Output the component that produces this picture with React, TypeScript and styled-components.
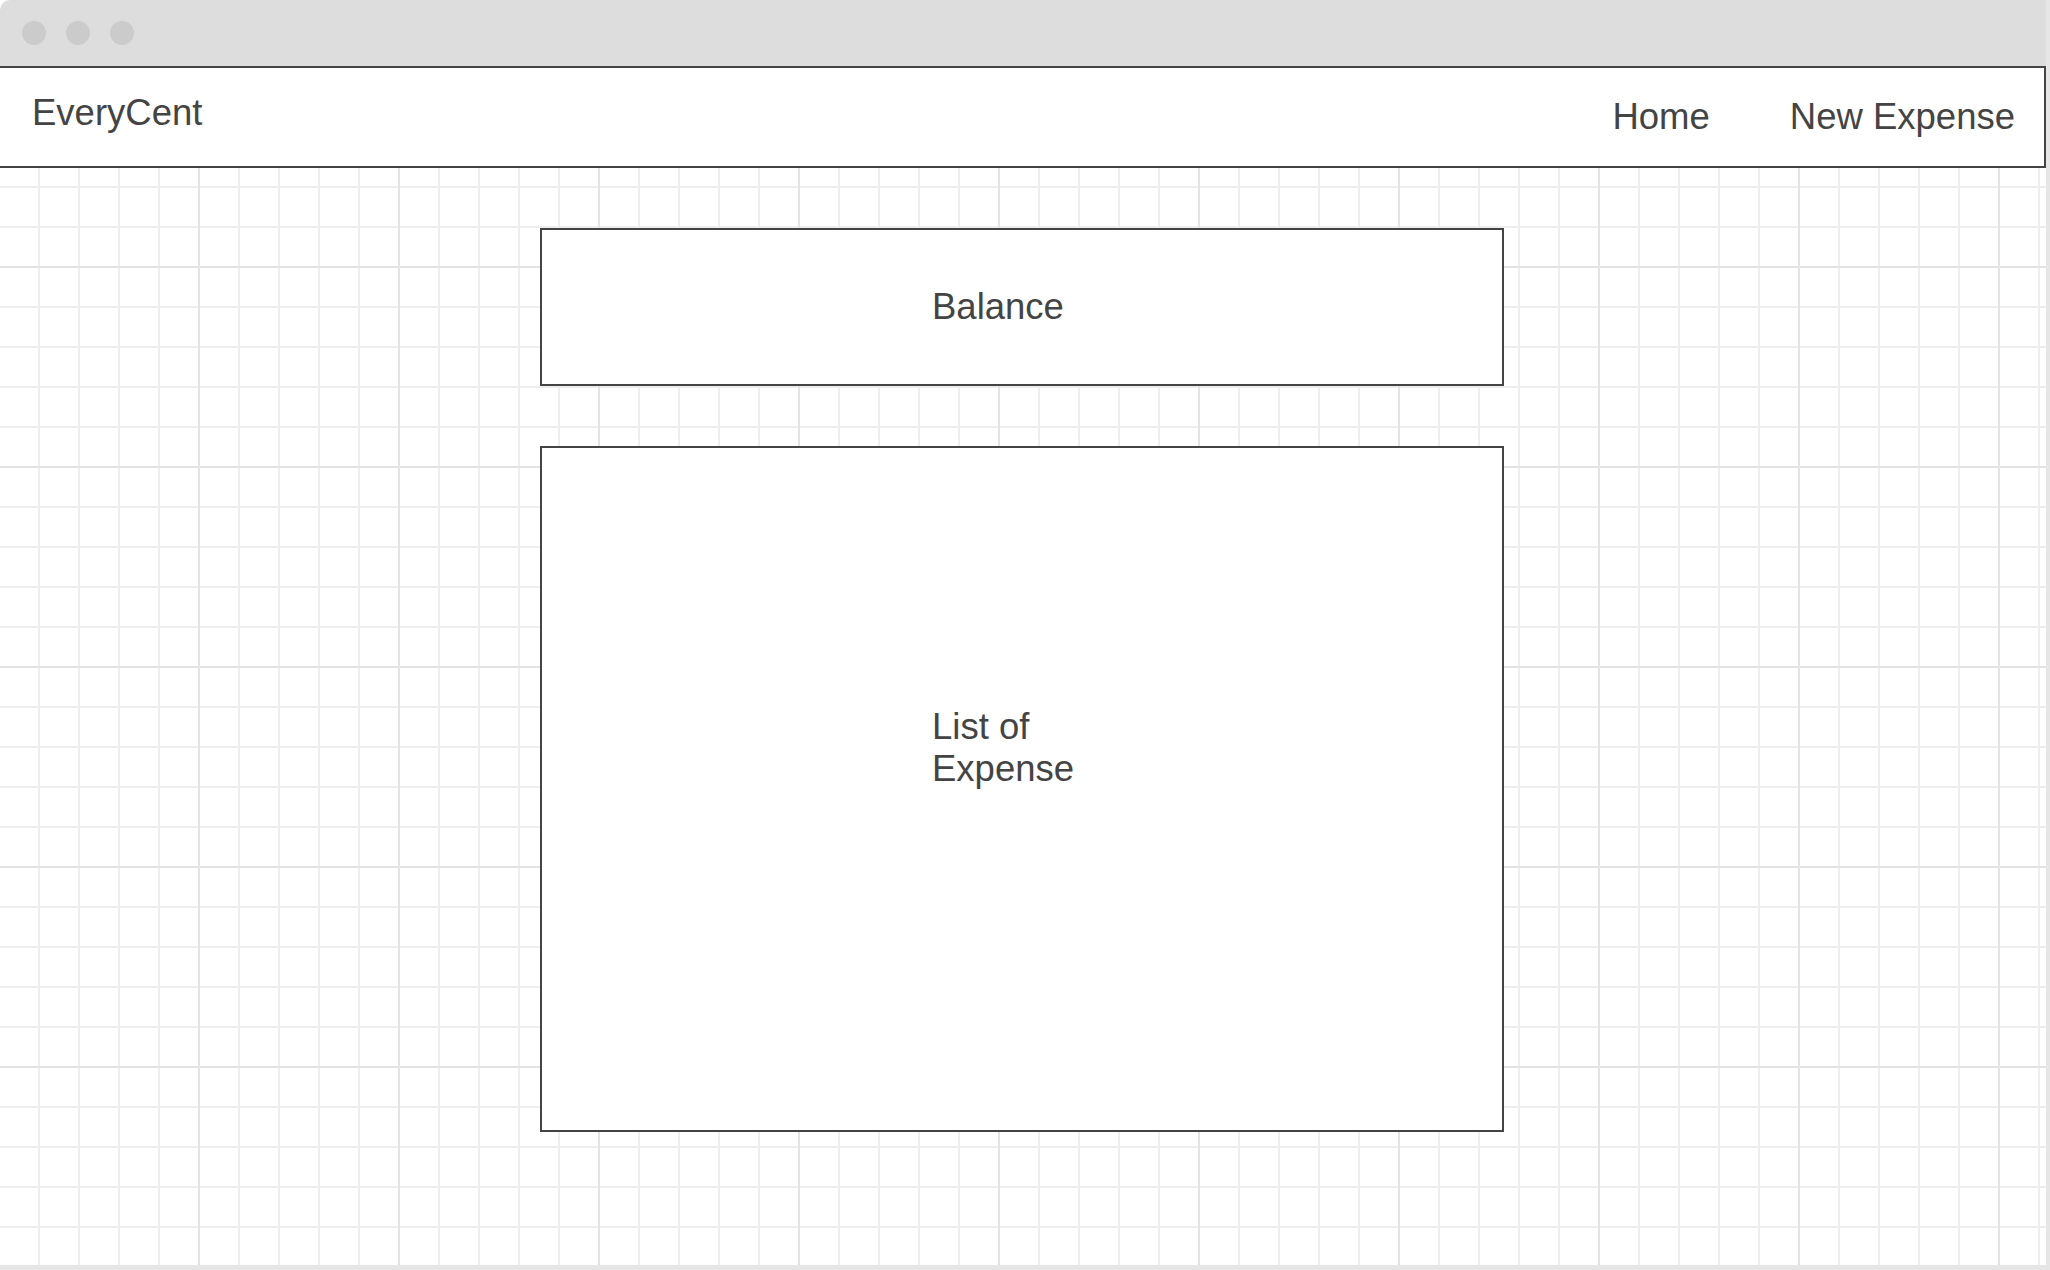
import styled, { createGlobalStyle } from "styled-components"

const GlobalStyle = createGlobalStyle`
  html, body {
    margin: 0;
    padding: 0;
    background: #ffffff;
  }
  body {
    font-family: "Liberation Sans", Arial, Helvetica, sans-serif;
    color: #444444;
  }
`

export default function App() {
  return (
    <>
      <GlobalStyle />
      <Window>
        <TitleBar>
          <Dot />
          <Dot />
          <Dot />
        </TitleBar>
        <Canvas>
          <Nav>
            <Brand>EveryCent</Brand>
            <NavMenu>
              <NavLink>Home</NavLink>
              <NavLink>New Expense</NavLink>
            </NavMenu>
          </Nav>
          <Content>
            <Panel $height={158} $align="center">
              <PanelLabel>Balance</PanelLabel>
            </Panel>
            <Panel $height={686} $align="flex-start" $padTop={258}>
              <PanelLabel>List of Expense</PanelLabel>
            </Panel>
          </Content>
        </Canvas>
      </Window>
    </>
  )
}

const Window = styled.div`
  width: 2050px;
  height: 1270px;
  box-sizing: border-box;
  display: flex;
  flex-direction: column;
  border-right: 4px solid #e6e6e6;
  border-bottom: 5px solid #e6e6e6;
  border-top-left-radius: 10px;
  overflow: hidden;
`

const TitleBar = styled.div`
  height: 66px;
  flex: none;
  background: #dddddd;
  display: flex;
  align-items: center;
  gap: 20px;
  padding: 0 0 0 22px;
  box-sizing: border-box;
`

const Dot = styled.span`
  width: 24px;
  height: 24px;
  border-radius: 50%;
  background: #cbcbcb;
`

const Canvas = styled.div`
  flex: 1;
  display: flex;
  flex-direction: column;
  background-color: #ffffff;
  background-image:
    linear-gradient(to right, transparent 198px, #e3e3e3 198px, #e3e3e3 200px),
    linear-gradient(to bottom, transparent 198px, #e3e3e3 198px, #e3e3e3 200px),
    linear-gradient(to right, transparent 38px, #eeeeee 38px, #eeeeee 40px),
    linear-gradient(to bottom, transparent 38px, #eeeeee 38px, #eeeeee 40px);
  background-size: 200px 200px, 200px 200px, 40px 40px, 40px 40px;
  background-position: 0 2px;
`

const Nav = styled.header`
  height: 102px;
  flex: none;
  box-sizing: border-box;
  background: #ffffff;
  border: 2px solid #444444;
  border-left: none;
  display: flex;
  justify-content: space-between;
  align-items: flex-start;
  padding: 24px 29px 0 32px;
`

const Brand = styled.div`
  font-size: 36.5px;
  color: #444444;
`

const NavMenu = styled.nav`
  display: flex;
  gap: 80px;
  margin-top: 4px;
`

const NavLink = styled.a`
  font-size: 36.5px;
  color: #444444;
  text-decoration: none;
  cursor: pointer;
`

const Content = styled.main`
  display: flex;
  flex-direction: column;
  align-items: center;
  gap: 60px;
  padding: 60px 2px 0 0;
`

const Panel = styled.section<{ $height: number; $align: string; $padTop?: number }>`
  width: 964px;
  height: ${(p) => p.$height}px;
  box-sizing: border-box;
  border: 2px solid #444444;
  background: #ffffff;
  display: flex;
  justify-content: center;
  align-items: ${(p) => p.$align};
  padding-top: ${(p) => p.$padTop ?? 0}px;
`

const PanelLabel = styled.div`
  width: 180px;
  font-size: 36.5px;
  color: #444444;
  text-align: left;
`
